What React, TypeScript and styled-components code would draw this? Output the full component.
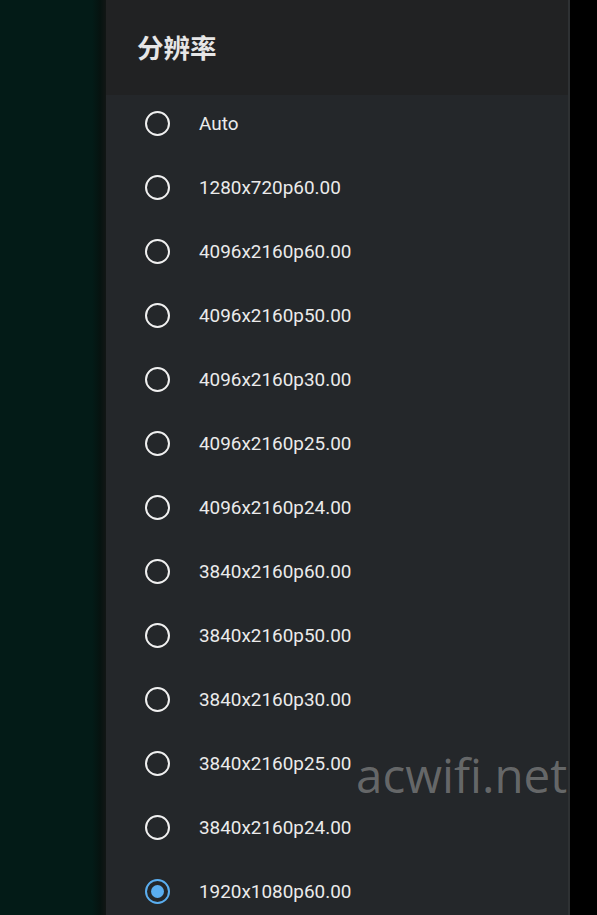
import React from "react";
import styled, { createGlobalStyle } from "styled-components";

const Global = createGlobalStyle`
  html, body {
    margin: 0;
    padding: 0;
    background: #000;
  }
  #root {
    height: 915px;
  }
`;

const Root = styled.div`
  display: flex;
  width: 597px;
  height: 915px;
  overflow: hidden;
  font-family: Roboto, "Noto Sans", "Noto Sans CJK SC", sans-serif;
`;

const Backdrop = styled.div`
  width: 106px;
  flex-shrink: 0;
  background: linear-gradient(to right, #031b17 0, #031b17 92px, #061310 100px, #121615 106px);
`;

const Panel = styled.div`
  position: relative;
  width: 464px;
  flex-shrink: 0;
  display: flex;
  flex-direction: column;
  background: #24272a;
  border-right: 2px solid #2e3133;
  box-sizing: border-box;
`;

const Header = styled.header`
  height: 95px;
  flex-shrink: 0;
  display: flex;
  align-items: center;
  padding: 0 0 0 31px;
  background: #212223;
  box-sizing: border-box;
`;

const Title = styled.h1`
  margin: 0 0 2px;
  font-family: "Noto Sans CJK SC", sans-serif;
  font-size: 26.5px;
  font-weight: 700;
  color: #e6e6e6;
`;

const List = styled.ul`
  list-style: none;
  margin: 0;
  padding: 0;
`;

const Row = styled.li`
  height: 64px;
  display: flex;
  align-items: center;
  padding: 0 0 8px 39px;
  box-sizing: border-box;
`;

const Radio = styled.span<{ $checked: boolean }>`
  width: 25px;
  height: 25px;
  flex-shrink: 0;
  box-sizing: border-box;
  border-radius: 50%;
  border: 2.5px solid ${(p) => (p.$checked ? "#5aaef0" : "#f0f0f0")};
  display: flex;
  align-items: center;
  justify-content: center;

  &::after {
    content: "";
    display: ${(p) => (p.$checked ? "block" : "none")};
    width: 13px;
    height: 13px;
    border-radius: 50%;
    background: #5aaef0;
  }
`;

const Label = styled.span`
  margin: 0 0 0 29px;
  font-size: 18.9px;
  font-weight: 400;
  color: #ebebeb;
`;

const Watermark = styled.div`
  position: absolute;
  left: 250px;
  top: 742px;
  font-family: "Open Sans", sans-serif;
  font-size: 47.5px;
  color: rgba(160, 160, 160, 0.55);
  pointer-events: none;
`;

const Edge = styled.div`
  flex: 1;
  background: #000;
`;

const modes = [
  "Auto",
  "1280x720p60.00",
  "4096x2160p60.00",
  "4096x2160p50.00",
  "4096x2160p30.00",
  "4096x2160p25.00",
  "4096x2160p24.00",
  "3840x2160p60.00",
  "3840x2160p50.00",
  "3840x2160p30.00",
  "3840x2160p25.00",
  "3840x2160p24.00",
  "1920x1080p60.00",
];

export default function App() {
  const selected = "1920x1080p60.00";
  return (
    <Root>
      <Global />
      <Backdrop />
      <Panel>
        <Header>
          <Title>分辨率</Title>
        </Header>
        <List>
          {modes.map((m) => (
            <Row key={m}>
              <Radio $checked={m === selected} />
              <Label>{m}</Label>
            </Row>
          ))}
        </List>
        <Watermark>acwifi.net</Watermark>
      </Panel>
      <Edge />
    </Root>
  );
}
